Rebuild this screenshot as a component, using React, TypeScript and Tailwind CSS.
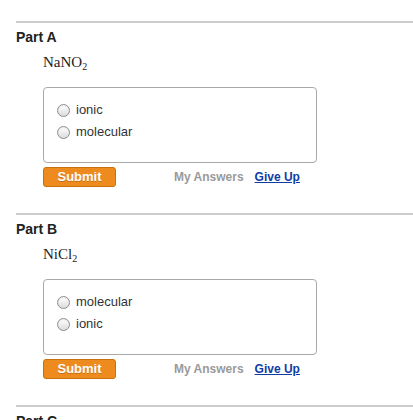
import React from 'react';

type Part = {
  label: string;
  formula: React.ReactNode;
  options: string[];
};

const parts: Part[] = [
  {
    label: 'Part A',
    formula: (
      <>
        NaNO<span className="relative top-[3px] text-[10px]">2</span>
      </>
    ),
    options: ['ionic', 'molecular'],
  },
  {
    label: 'Part B',
    formula: (
      <>
        NiCl<span className="relative top-[3px] text-[10px]">2</span>
      </>
    ),
    options: ['molecular', 'ionic'],
  },
  {
    label: 'Part C',
    formula: null,
    options: [],
  },
];

const Radio: React.FC = () => (
  <span className="inline-block h-[13px] w-[13px] shrink-0 rounded-full border border-[#8e8e8e] bg-linear-to-b from-white to-[#dcdcdc] shadow-[inset_0_1px_1px_rgba(0,0,0,0.08)]" />
);

const Section: React.FC<{ part: Part }> = ({ part }) => (
  <section className="border-t-2 border-[#cccccc] pt-[6px]">
    <h2 className="h-[16px] text-[14px] leading-[16px] font-bold text-[#222]">{part.label}</h2>
    {part.formula && (
      <div className="ml-[27px]">
        <p className="mt-[9px] h-[17px] font-['Liberation_Serif',serif] text-[15px] leading-[17px] text-[#222]">
          {part.formula}
        </p>

        {/* Answer choices */}
        <div className="mt-[16px] h-[76px] w-[274px] rounded-[4px] border border-[#a9a9a9] pt-[11px] pl-[13px]">
          {part.options.map((opt) => (
            <label key={opt} className="flex h-[22px] items-center gap-[6px] text-[13px] text-[#333]">
              <Radio />
              <span>{opt}</span>
            </label>
          ))}
        </div>

        <div className="mt-[4px] mb-[26px] flex items-center">
          <button className="h-[20px] w-[73px] rounded-[3px] border border-[#c9700f] bg-[#ee8b1f] text-[13px] leading-[18px] font-bold text-white [text-shadow:0_1px_0_rgba(0,0,0,0.2)]">
            Submit
          </button>
          <span className="ml-[58px] text-[12px] font-bold text-[#9a9a9a]">My Answers</span>
          <a className="ml-[11px] text-[12px] font-bold text-[#0f3da5] underline">Give Up</a>
        </div>
      </div>
    )}
  </section>
);

export default function App() {
  return (
    <div className="h-[420px] w-[413px] overflow-hidden bg-white pt-[21px] pl-[16px] font-['Liberation_Sans',Arial,sans-serif]">
      {parts.map((p) => (
        <Section key={p.label} part={p} />
      ))}
    </div>
  );
}
